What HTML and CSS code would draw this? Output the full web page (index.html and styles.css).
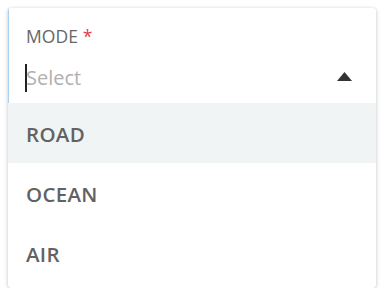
FILE: index.html
```
<!DOCTYPE html>
<html>
<head>
<meta charset="utf-8">
<link rel="stylesheet" href="styles.css">
</head>
<body>
<div class="card">
  <div class="field">
    <div class="label">MODE <span class="req">*</span></div>
    <div class="control">
      <div class="value"><span class="caret"></span><span class="placeholder">Select</span></div>
      <svg class="arrow" width="15" height="9" viewBox="0 0 15 9"><polygon points="7.5,0 15,9 0,9" fill="#333"/></svg>
    </div>
  </div>
  <ul class="options">
    <li class="option active">ROAD</li>
    <li class="option">OCEAN</li>
    <li class="option">AIR</li>
  </ul>
</div>
</body>
</html>
```
FILE: styles.css
```
html, body { margin: 0; padding: 0; background: #fff; }
body { font-family: "Open Sans", "Liberation Sans", sans-serif; }
.card {
  margin: 8px 0 0 8px;
  width: 368px;
  height: 280px;
  background: #fff;
  border-radius: 3px;
  box-shadow: 0 1px 4px rgba(0,0,0,0.22), 0 0 1px rgba(0,0,0,0.12);
  overflow: hidden;
  box-sizing: border-box;
}
.field {
  height: 95px;
  box-sizing: border-box;
  padding: 16px 24px 0 17px;
  border-left: 1px solid #a9d0ee;
}
.label {
  font-size: 17.5px;
  line-height: 24px;
  color: #666;
  letter-spacing: 0.1px;
}
.req { color: #e0414f; }
.control {
  margin-top: 16px;
  height: 28px;
  display: flex;
  align-items: center;
  justify-content: space-between;
}
.value { display: flex; align-items: center; height: 28px; }
.caret {
  display: inline-block;
  width: 2px;
  height: 28px;
  background: #222;
  margin-left: -1px;
}
.placeholder {
  font-size: 20px;
  line-height: 28px;
  color: #b0b0b0;
  margin-left: -1px;
}
.arrow { display: block; margin-top: -4px; }
.options { list-style: none; margin: 0; padding: 0; }
.option {
  height: 60px;
  line-height: 60px;
  padding: 1px 0 0 18px;
  box-sizing: border-box;
  font-size: 20.5px;
  font-weight: 600;
  color: #626262;
  letter-spacing: 0.3px;
}
.option.active { background: #f1f4f5; }
```
